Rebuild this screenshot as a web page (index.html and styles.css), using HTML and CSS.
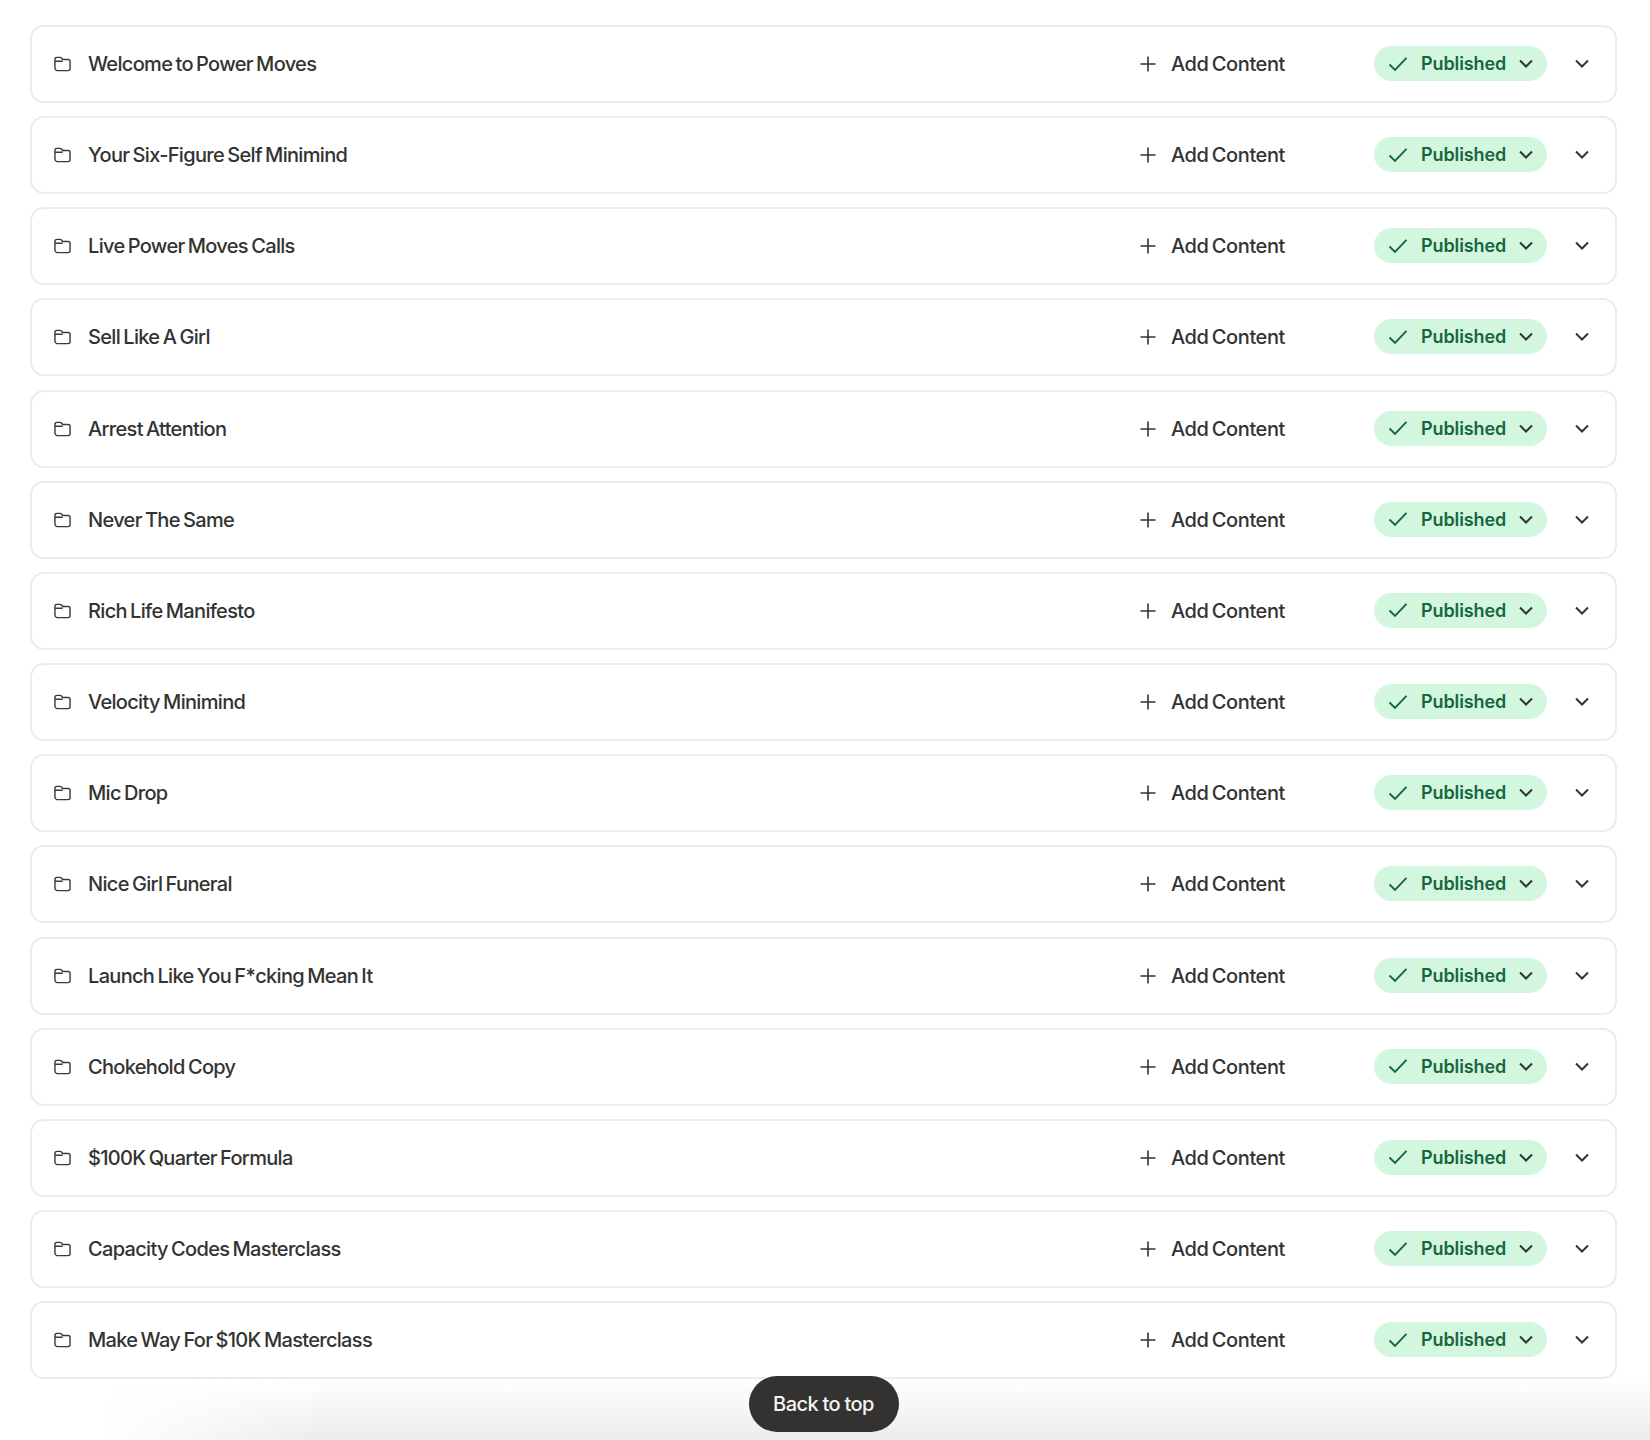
FILE: index.html
```html
<!DOCTYPE html>
<html lang="en">
<head>
<meta charset="utf-8">
<title>Power Moves</title>
<link rel="stylesheet" href="styles.css">
</head>
<body>
<svg class="sprite" width="0" height="0" aria-hidden="true">
  <symbol id="folder" viewBox="0 0 18 16"><path d="M1 3.2C1 2 1.9 1 3.1 1h3.3c.6 0 1.1.3 1.5.7l1.2 1.5h5.8c1.200 0 2.100 1 2.100 2.200v7.400c0 1.200-.9 2.200-2.100 2.200H3.100C1.900 14.800 1 13.800 1 12.600zM1 5h8.200" fill="none" stroke="currentColor" stroke-width="1.500" stroke-linejoin="round"/></symbol>
  <symbol id="plus" viewBox="0 0 16 16"><path d="M8 .5v15M.5 8h15" fill="none" stroke="currentColor" stroke-width="1.600"/></symbol>
  <symbol id="check" viewBox="0 0 20 16"><path d="M1.500 8.500l5.500 5.500L18.500 1.800" fill="none" stroke="currentColor" stroke-width="1.900"/></symbol>
  <symbol id="chev" viewBox="0 0 14 9"><path d="M1 1.500l6 6 6-6" fill="none" stroke="currentColor" stroke-width="2"/></symbol>
</svg>
<main class="list">
  <article class="row"><svg class="ico-folder"><use href="#folder"/></svg><h3 class="title">Welcome to Power Moves</h3><button class="add"><svg class="ico-plus"><use href="#plus"/></svg>Add Content</button><button class="pill"><svg class="ico-check"><use href="#check"/></svg><span class="pill-text">Published</span><svg class="ico-chev dark"><use href="#chev"/></svg></button><button class="toggle"><svg class="ico-chev"><use href="#chev"/></svg></button></article>
  <article class="row"><svg class="ico-folder"><use href="#folder"/></svg><h3 class="title">Your Six-Figure Self Minimind</h3><button class="add"><svg class="ico-plus"><use href="#plus"/></svg>Add Content</button><button class="pill"><svg class="ico-check"><use href="#check"/></svg><span class="pill-text">Published</span><svg class="ico-chev dark"><use href="#chev"/></svg></button><button class="toggle"><svg class="ico-chev"><use href="#chev"/></svg></button></article>
  <article class="row"><svg class="ico-folder"><use href="#folder"/></svg><h3 class="title">Live Power Moves Calls</h3><button class="add"><svg class="ico-plus"><use href="#plus"/></svg>Add Content</button><button class="pill"><svg class="ico-check"><use href="#check"/></svg><span class="pill-text">Published</span><svg class="ico-chev dark"><use href="#chev"/></svg></button><button class="toggle"><svg class="ico-chev"><use href="#chev"/></svg></button></article>
  <article class="row"><svg class="ico-folder"><use href="#folder"/></svg><h3 class="title">Sell Like A Girl</h3><button class="add"><svg class="ico-plus"><use href="#plus"/></svg>Add Content</button><button class="pill"><svg class="ico-check"><use href="#check"/></svg><span class="pill-text">Published</span><svg class="ico-chev dark"><use href="#chev"/></svg></button><button class="toggle"><svg class="ico-chev"><use href="#chev"/></svg></button></article>
  <article class="row"><svg class="ico-folder"><use href="#folder"/></svg><h3 class="title">Arrest Attention</h3><button class="add"><svg class="ico-plus"><use href="#plus"/></svg>Add Content</button><button class="pill"><svg class="ico-check"><use href="#check"/></svg><span class="pill-text">Published</span><svg class="ico-chev dark"><use href="#chev"/></svg></button><button class="toggle"><svg class="ico-chev"><use href="#chev"/></svg></button></article>
  <article class="row"><svg class="ico-folder"><use href="#folder"/></svg><h3 class="title">Never The Same</h3><button class="add"><svg class="ico-plus"><use href="#plus"/></svg>Add Content</button><button class="pill"><svg class="ico-check"><use href="#check"/></svg><span class="pill-text">Published</span><svg class="ico-chev dark"><use href="#chev"/></svg></button><button class="toggle"><svg class="ico-chev"><use href="#chev"/></svg></button></article>
  <article class="row"><svg class="ico-folder"><use href="#folder"/></svg><h3 class="title">Rich Life Manifesto</h3><button class="add"><svg class="ico-plus"><use href="#plus"/></svg>Add Content</button><button class="pill"><svg class="ico-check"><use href="#check"/></svg><span class="pill-text">Published</span><svg class="ico-chev dark"><use href="#chev"/></svg></button><button class="toggle"><svg class="ico-chev"><use href="#chev"/></svg></button></article>
  <article class="row"><svg class="ico-folder"><use href="#folder"/></svg><h3 class="title">Velocity Minimind</h3><button class="add"><svg class="ico-plus"><use href="#plus"/></svg>Add Content</button><button class="pill"><svg class="ico-check"><use href="#check"/></svg><span class="pill-text">Published</span><svg class="ico-chev dark"><use href="#chev"/></svg></button><button class="toggle"><svg class="ico-chev"><use href="#chev"/></svg></button></article>
  <article class="row"><svg class="ico-folder"><use href="#folder"/></svg><h3 class="title">Mic Drop</h3><button class="add"><svg class="ico-plus"><use href="#plus"/></svg>Add Content</button><button class="pill"><svg class="ico-check"><use href="#check"/></svg><span class="pill-text">Published</span><svg class="ico-chev dark"><use href="#chev"/></svg></button><button class="toggle"><svg class="ico-chev"><use href="#chev"/></svg></button></article>
  <article class="row"><svg class="ico-folder"><use href="#folder"/></svg><h3 class="title">Nice Girl Funeral</h3><button class="add"><svg class="ico-plus"><use href="#plus"/></svg>Add Content</button><button class="pill"><svg class="ico-check"><use href="#check"/></svg><span class="pill-text">Published</span><svg class="ico-chev dark"><use href="#chev"/></svg></button><button class="toggle"><svg class="ico-chev"><use href="#chev"/></svg></button></article>
  <article class="row"><svg class="ico-folder"><use href="#folder"/></svg><h3 class="title">Launch Like You F*cking Mean It</h3><button class="add"><svg class="ico-plus"><use href="#plus"/></svg>Add Content</button><button class="pill"><svg class="ico-check"><use href="#check"/></svg><span class="pill-text">Published</span><svg class="ico-chev dark"><use href="#chev"/></svg></button><button class="toggle"><svg class="ico-chev"><use href="#chev"/></svg></button></article>
  <article class="row"><svg class="ico-folder"><use href="#folder"/></svg><h3 class="title">Chokehold Copy</h3><button class="add"><svg class="ico-plus"><use href="#plus"/></svg>Add Content</button><button class="pill"><svg class="ico-check"><use href="#check"/></svg><span class="pill-text">Published</span><svg class="ico-chev dark"><use href="#chev"/></svg></button><button class="toggle"><svg class="ico-chev"><use href="#chev"/></svg></button></article>
  <article class="row"><svg class="ico-folder"><use href="#folder"/></svg><h3 class="title">$100K Quarter Formula</h3><button class="add"><svg class="ico-plus"><use href="#plus"/></svg>Add Content</button><button class="pill"><svg class="ico-check"><use href="#check"/></svg><span class="pill-text">Published</span><svg class="ico-chev dark"><use href="#chev"/></svg></button><button class="toggle"><svg class="ico-chev"><use href="#chev"/></svg></button></article>
  <article class="row"><svg class="ico-folder"><use href="#folder"/></svg><h3 class="title">Capacity Codes Masterclass</h3><button class="add"><svg class="ico-plus"><use href="#plus"/></svg>Add Content</button><button class="pill"><svg class="ico-check"><use href="#check"/></svg><span class="pill-text">Published</span><svg class="ico-chev dark"><use href="#chev"/></svg></button><button class="toggle"><svg class="ico-chev"><use href="#chev"/></svg></button></article>
  <article class="row"><svg class="ico-folder"><use href="#folder"/></svg><h3 class="title">Make Way For $10K Masterclass</h3><button class="add"><svg class="ico-plus"><use href="#plus"/></svg>Add Content</button><button class="pill"><svg class="ico-check"><use href="#check"/></svg><span class="pill-text">Published</span><svg class="ico-chev dark"><use href="#chev"/></svg></button><button class="toggle"><svg class="ico-chev"><use href="#chev"/></svg></button></article>
</main>
<div class="fade"></div>
<button class="back">Back to top</button>
</body>
</html>
```
FILE: styles.css
```css
* { box-sizing: border-box; }
html, body { margin: 0; height: 1440px; overflow: hidden; background: #fff; }
body { position: relative; font-family: Inter, "Liberation Sans", sans-serif; color: #333331; }
.sprite { position: absolute; }
.list { display: flex; flex-direction: column; gap: 13.16px; padding: 25px 33px 0 30px; }
.row {
  display: flex; align-items: center; height: 78px;
  padding: 0 26px 0 22px;
  border: 2px solid #ececec; border-radius: 14px; background: #fff;
}
.ico-folder { width: 17px; height: 16px; flex: none; margin-right: 17px; color: #3a3a38; }
.title { flex: 1; margin: 0; font-size: 20px; font-weight: 500; letter-spacing: -0.68px; word-spacing: -1.4px; white-space: nowrap; }
button { font: inherit; color: inherit; background: none; border: 0; padding: 0; display: flex; align-items: center; }
.add { font-size: 20px; font-weight: 500; letter-spacing: -0.4px; word-spacing: -1.6px; margin-right: 89px; white-space: nowrap; }
.ico-plus { width: 16px; height: 16px; margin-right: 15px; color: #333331; }
.pill {
  width: 173px; height: 35px; padding: 0 14px 0 14px; border-radius: 18px;
  background: #d3f6df; margin-right: 28px; margin-top: -1px;
}
.ico-check { width: 20px; height: 16px; flex: none; margin-right: 13px; color: #17663f; }
.pill-text { font-size: 18px; font-weight: 600; letter-spacing: -0.1px; color: #17663f; margin-right: 13px; }
.ico-chev { width: 14px; height: 9px; flex: none; display: block; color: #333331; }
.toggle { margin-top: -1px; }
.fade {
  position: absolute; left: 100px; right: 0; bottom: 0; height: 60px;
  background: linear-gradient(to bottom, rgba(235,235,235,0), #ececec);
  -webkit-mask-image: linear-gradient(to right, transparent 0, #000 220px);
  mask-image: linear-gradient(to right, transparent 0, #000 220px);
  pointer-events: none;
}
.back {
  position: absolute; left: 748.5px; top: 1376px; width: 150px; height: 56px;
  justify-content: center; border-radius: 28px; background: #333230; color: #f4f4f2;
  font-size: 20px; font-weight: 500; letter-spacing: -0.5px; word-spacing: -0.6px;
}
```
